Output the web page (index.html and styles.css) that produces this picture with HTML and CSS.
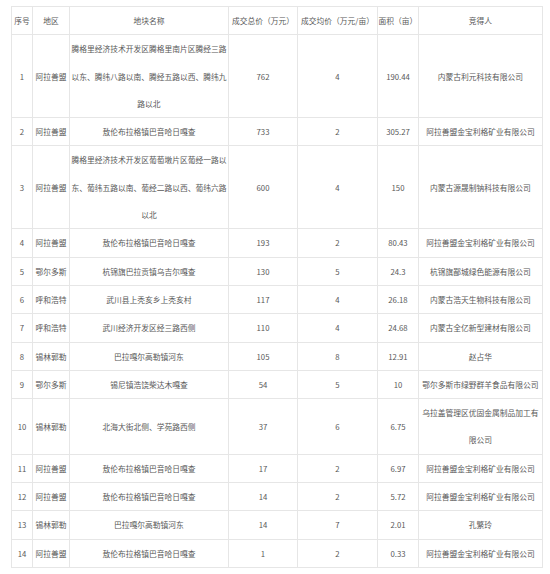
FILE: index.html
```html
<!DOCTYPE html>
<html lang="zh-CN">
<head>
<meta charset="utf-8">
<title>土地成交表</title>
<link rel="stylesheet" href="styles.css">
</head>
<body>
<table class="deals">
  <colgroup>
    <col class="c-no"><col class="c-area"><col class="c-name"><col class="c-total"><col class="c-avg"><col class="c-size"><col class="c-winner">
  </colgroup>
  <thead>
    <tr><th>序号</th><th>地区</th><th>地块名称</th><th>成交总价（万元）</th><th>成交均价（万元/亩）</th><th>面积（亩）</th><th>竞得人</th></tr>
  </thead>
  <tbody>
    <tr><td>1</td><td>阿拉善盟</td><td>腾格里经济技术开发区腾格里南片区腾经三路以东、腾纬八路以南、腾经五路以西、腾纬九路以北</td><td>762</td><td>4</td><td>190.44</td><td>内蒙古利元科技有限公司</td></tr>
    <tr><td>2</td><td>阿拉善盟</td><td>敖伦布拉格镇巴音哈日嘎查</td><td>733</td><td>2</td><td>305.27</td><td>阿拉善盟金宝利格矿业有限公司</td></tr>
    <tr><td>3</td><td>阿拉善盟</td><td>腾格里经济技术开发区葡萄墩片区葡经一路以东、葡纬五路以南、葡经二路以西、葡纬六路以北</td><td>600</td><td>4</td><td>150</td><td>内蒙古源晟制钠科技有限公司</td></tr>
    <tr><td>4</td><td>阿拉善盟</td><td>敖伦布拉格镇巴音哈日嘎查</td><td>193</td><td>2</td><td>80.43</td><td>阿拉善盟金宝利格矿业有限公司</td></tr>
    <tr><td>5</td><td>鄂尔多斯</td><td>杭锦旗巴拉贡镇乌吉尔嘎查</td><td>130</td><td>5</td><td>24.3</td><td>杭锦旗鄙城绿色能源有限公司</td></tr>
    <tr><td>6</td><td>呼和浩特</td><td>武川县上秃亥乡上秃亥村</td><td>117</td><td>4</td><td>26.18</td><td>内蒙古浩天生物科技有限公司</td></tr>
    <tr><td>7</td><td>呼和浩特</td><td>武川经济开发区经三路西侧</td><td>110</td><td>4</td><td>24.68</td><td>内蒙古全亿新型建材有限公司</td></tr>
    <tr><td>8</td><td>锡林郭勒</td><td>巴拉嘎尔高勒镇河东</td><td>105</td><td>8</td><td>12.91</td><td>赵占华</td></tr>
    <tr><td>9</td><td>鄂尔多斯</td><td>锡尼镇浩饶柴达木嘎查</td><td>54</td><td>5</td><td>10</td><td>鄂尔多斯市绿野群羊食品有限公司</td></tr>
    <tr><td>10</td><td>锡林郭勒</td><td>北海大街北侧、学苑路西侧</td><td>37</td><td>6</td><td>6.75</td><td>乌拉盖管理区优固金属制品加工有限公司</td></tr>
    <tr><td>11</td><td>阿拉善盟</td><td>敖伦布拉格镇巴音哈日嘎查</td><td>17</td><td>2</td><td>6.97</td><td>阿拉善盟金宝利格矿业有限公司</td></tr>
    <tr><td>12</td><td>阿拉善盟</td><td>敖伦布拉格镇巴音哈日嘎查</td><td>14</td><td>2</td><td>5.72</td><td>阿拉善盟金宝利格矿业有限公司</td></tr>
    <tr><td>13</td><td>锡林郭勒</td><td>巴拉嘎尔高勒镇河东</td><td>14</td><td>7</td><td>2.01</td><td>孔繁玲</td></tr>
    <tr><td>14</td><td>阿拉善盟</td><td>敖伦布拉格镇巴音哈日嘎查</td><td>1</td><td>2</td><td>0.33</td><td>阿拉善盟金宝利格矿业有限公司</td></tr>
  </tbody>
</table>
</body>
</html>
```
FILE: styles.css
```css
html, body {
  margin: 0;
  background: #ffffff;
}
body {
  padding: 6px 8px 0 11px;
  font-family: "Noto Sans CJK SC", "Noto Sans", sans-serif;
  font-size: 7.75px;
  color: #585858;
  text-spacing-trim: space-all;
}
.deals {
  border-collapse: collapse;
  table-layout: fixed;
  width: 532px;
}
.c-no { width: 21px; }
.c-area { width: 37px; }
.c-name { width: 159px; }
.c-total { width: 69px; }
.c-avg { width: 80px; }
.c-size { width: 41px; }
.c-winner { width: 124px; }
.deals th,
.deals td {
  border: 1px solid #e6e6e6;
  padding: 0 1px;
  text-align: center;
  vertical-align: middle;
  line-height: 27.3px;
  font-weight: normal;
  word-break: break-all;
  text-spacing-trim: space-all;
}
.deals th {
  padding: 0;
  white-space: nowrap;
}
```
